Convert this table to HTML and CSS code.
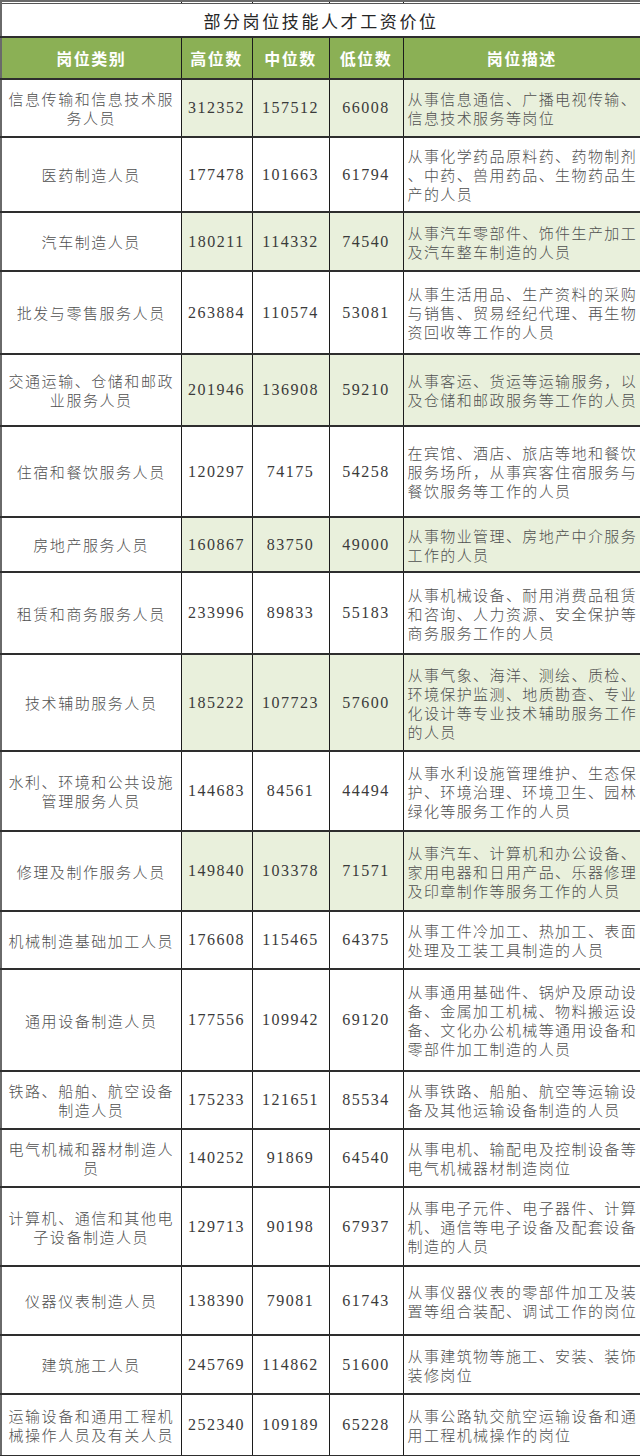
FILE: index.html
```html
<!DOCTYPE html>
<html lang="zh-CN">
<head>
<meta charset="utf-8">
<title>部分岗位技能人才工资价位</title>
<link rel="stylesheet" href="styles.css">
</head>
<body>
<table class="wage">
  <colgroup>
    <col class="c-type"><col class="c-num"><col class="c-mid"><col class="c-low"><col class="c-desc">
  </colgroup>
  <tbody>
    <tr class="cut"><td></td><td></td><td></td><td></td><td></td></tr>
    <tr class="title-row"><td colspan="5" class="title">部分岗位技能人才工资价位</td></tr>
    <tr class="head"><th>岗位类别</th><th>高位数</th><th>中位数</th><th>低位数</th><th>岗位描述</th></tr>

    <tr class="alt h58"><td class="type">信息传输和信息技术服<br>务人员</td><td class="num">312352</td><td class="num">157512</td><td class="num">66008</td><td class="desc">从事信息通信、广播电视传输、<br>信息技术服务等岗位</td></tr>
    <tr class="h75"><td class="type">医药制造人员</td><td class="num">177478</td><td class="num">101663</td><td class="num">61794</td><td class="desc">从事化学药品原料药、药物制剂<br>、中药、兽用药品、生物药品生<br>产的人员</td></tr>
    <tr class="alt h59"><td class="type">汽车制造人员</td><td class="num">180211</td><td class="num">114332</td><td class="num">74540</td><td class="desc">从事汽车零部件、饰件生产加工<br>及汽车整车制造的人员</td></tr>
    <tr class="h83"><td class="type">批发与零售服务人员</td><td class="num">263884</td><td class="num">110574</td><td class="num">53081</td><td class="desc">从事生活用品、生产资料的采购<br>与销售、贸易经纪代理、再生物<br>资回收等工作的人员</td></tr>
    <tr class="alt h72"><td class="type">交通运输、仓储和邮政<br>业服务人员</td><td class="num">201946</td><td class="num">136908</td><td class="num">59210</td><td class="desc">从事客运、货运等运输服务，以<br>及仓储和邮政服务等工作的人员</td></tr>
    <tr class="h91"><td class="type">住宿和餐饮服务人员</td><td class="num">120297</td><td class="num">74175</td><td class="num">54258</td><td class="desc">在宾馆、酒店、旅店等地和餐饮<br>服务场所，从事宾客住宿服务与<br>餐饮服务等工作的人员</td></tr>
    <tr class="alt h55"><td class="type">房地产服务人员</td><td class="num">160867</td><td class="num">83750</td><td class="num">49000</td><td class="desc">从事物业管理、房地产中介服务<br>工作的人员</td></tr>
    <tr class="h82"><td class="type">租赁和商务服务人员</td><td class="num">233996</td><td class="num">89833</td><td class="num">55183</td><td class="desc">从事机械设备、耐用消费品租赁<br>和咨询、人力资源、安全保护等<br>商务服务工作的人员</td></tr>
    <tr class="alt h97"><td class="type">技术辅助服务人员</td><td class="num">185222</td><td class="num">107723</td><td class="num">57600</td><td class="desc">从事气象、海洋、测绘、质检、<br>环境保护监测、地质勘查、专业<br>化设计等专业技术辅助服务工作<br>的人员</td></tr>
    <tr class="h80"><td class="type">水利、环境和公共设施<br>管理服务人员</td><td class="num">144683</td><td class="num">84561</td><td class="num">44494</td><td class="desc">从事水利设施管理维护、生态保<br>护、环境治理、环境卫生、园林<br>绿化等服务工作的人员</td></tr>
    <tr class="alt h80"><td class="type">修理及制作服务人员</td><td class="num">149840</td><td class="num">103378</td><td class="num">71571</td><td class="desc">从事汽车、计算机和办公设备、<br>家用电器和日用产品、乐器修理<br>及印章制作等服务工作的人员</td></tr>
    <tr class="h58"><td class="type">机械制造基础加工人员</td><td class="num">176608</td><td class="num">115465</td><td class="num">64375</td><td class="desc">从事工件冷加工、热加工、表面<br>处理及工装工具制造的人员</td></tr>
    <tr class="h102"><td class="type">通用设备制造人员</td><td class="num">177556</td><td class="num">109942</td><td class="num">69120</td><td class="desc">从事通用基础件、锅炉及原动设<br>备、金属加工机械、物料搬运设<br>备、文化办公机械等通用设备和<br>零部件加工制造的人员</td></tr>
    <tr class="h58"><td class="type">铁路、船舶、航空设备<br>制造人员</td><td class="num">175233</td><td class="num">121651</td><td class="num">85534</td><td class="desc">从事铁路、船舶、航空等运输设<br>备及其他运输设备制造的人员</td></tr>
    <tr class="h58"><td class="type">电气机械和器材制造人<br>员</td><td class="num">140252</td><td class="num">91869</td><td class="num">64540</td><td class="desc">从事电机、输配电及控制设备等<br>电气机械器材制造岗位</td></tr>
    <tr class="h79"><td class="type">计算机、通信和其他电<br>子设备制造人员</td><td class="num">129713</td><td class="num">90198</td><td class="num">67937</td><td class="desc">从事电子元件、电子器件、计算<br>机、通信等电子设备及配套设备<br>制造的人员</td></tr>
    <tr class="h69"><td class="type">仪器仪表制造人员</td><td class="num">138390</td><td class="num">79081</td><td class="num">61743</td><td class="desc">从事仪器仪表的零部件加工及装<br>置等组合装配、调试工作的岗位</td></tr>
    <tr class="h59"><td class="type">建筑施工人员</td><td class="num">245769</td><td class="num">114862</td><td class="num">51600</td><td class="desc">从事建筑物等施工、安装、装饰<br>装修岗位</td></tr>
    <tr class="h62 last"><td class="type">运输设备和通用工程机<br>械操作人员及有关人员</td><td class="num">252340</td><td class="num">109189</td><td class="num">65228</td><td class="desc">从事公路轨交航空运输设备和通<br>用工程机械操作的岗位</td></tr>
  </tbody>
</table>
</body>
</html>
```
FILE: styles.css
```css
html, body {
  margin: 0;
  padding: 0;
  background: #ffffff;
}

.wage {
  width: 640px;
  border-collapse: collapse;
  table-layout: fixed;
  border: 2px solid #6a6a6a;
  font-family: "Noto Sans CJK SC", "Noto Sans", sans-serif;
  font-weight: 300;
  color: #555555;
}

.c-type { width: 180px; }
.c-num { width: 71px; }
.c-mid { width: 77px; }
.c-low { width: 74px; }
.c-desc { width: 238px; }

.wage td,
.wage th {
  border-left: 1px solid #1c1c1c;
  border-right: 1px solid #1c1c1c;
  border-bottom: 2px solid #2e2e2e;
  padding: 0;
  vertical-align: middle;
}

.cut td {
  height: 1px;
  border-bottom: 1px solid #555555;
}

.title {
  height: 32px;
  text-align: center;
  font-size: 17px;
  font-weight: 400;
  letter-spacing: 2.6px;
  color: #262626;
  background: #ffffff;
}

.head th {
  height: 40px;
  background: #8bb055;
  color: #ffffff;
  font-weight: 600;
  font-size: 16px;
  letter-spacing: 1.5px;
  text-align: center;
}

.type {
  text-align: center;
  font-size: 15px;
  line-height: 19px;
  letter-spacing: 1.55px;
  color: #505050;
  white-space: nowrap;
}

.num {
  text-align: center;
  font-family: "Liberation Serif", "Times New Roman", serif;
  font-weight: 400;
  font-size: 16px;
  letter-spacing: 1.5px;
  color: #3a3a3a;
}

.wage .desc {
  text-align: left;
  padding-left: 4px;
  font-size: 15px;
  line-height: 19px;
  letter-spacing: 1.4px;
  color: #505050;
  white-space: nowrap;
  overflow: hidden;
}

.alt .num,
.alt .desc {
  background: #e9f0dc;
}

.h55 td { height: 53px; }
.h58 td { height: 56px; }
.h59 td { height: 57px; }
.h62 td { height: 60px; }
.h69 td { height: 67px; }
.h72 td { height: 70px; }
.h75 td { height: 73px; }
.h79 td { height: 77px; }
.h80 td { height: 78px; }
.h82 td { height: 80px; }
.h83 td { height: 81px; }
.h91 td { height: 89px; }
.h97 td { height: 95px; }
.h102 td { height: 100px; }
```
